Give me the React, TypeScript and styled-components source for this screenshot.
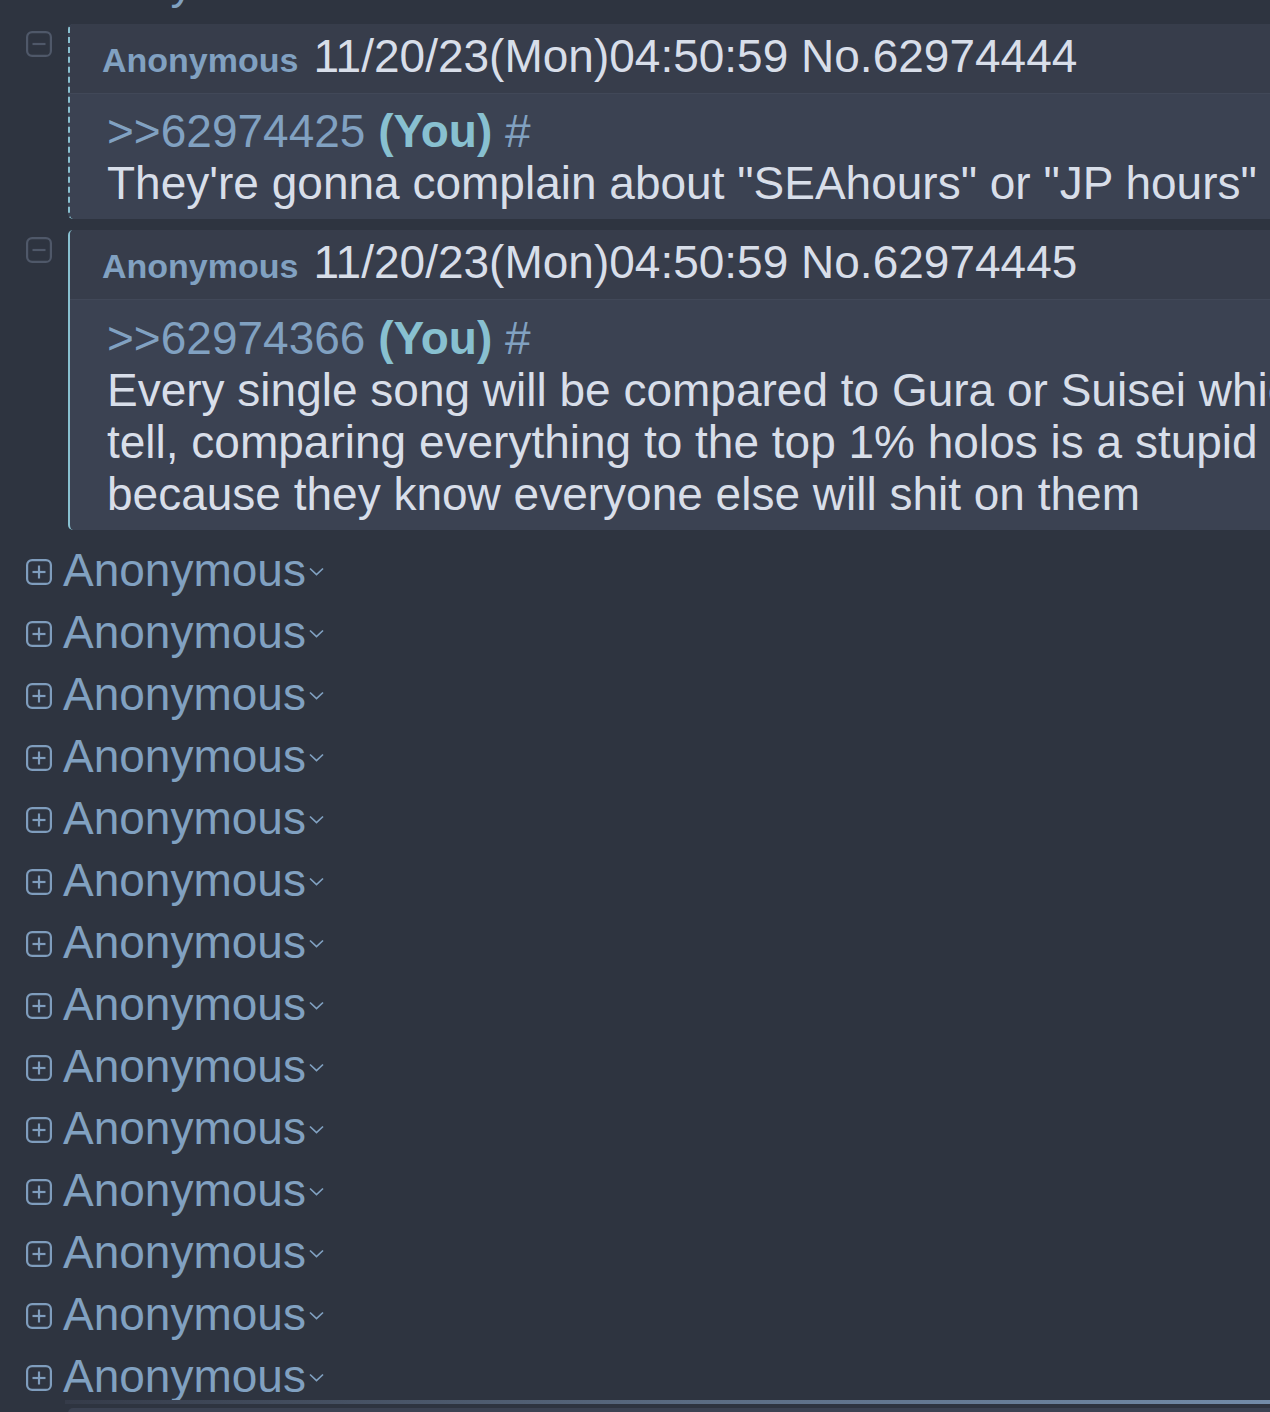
import React from "react";
import styled, { createGlobalStyle } from "styled-components";

const GlobalStyle = createGlobalStyle`
  html, body {
    margin: 0;
    padding: 0;
    background: #2e3440;
    overflow: hidden;
  }
  body {
    font-family: "Liberation Sans", Arial, Helvetica, sans-serif;
  }
`;

export const Thread = styled.div`
  display: flex;
  flex-direction: column;
  gap: 11px;
  margin-top: -49px;
  padding-left: 26px;
  width: 1600px;
`;

export const PostRow = styled.div`
  display: flex;
  align-items: flex-start;
  gap: 16px;
`;

export const ToggleIcon = styled.svg<{ $tone: "muted" | "link" }>`
  flex: none;
  width: 26px;
  height: 26px;
  margin-top: 7px;
  color: ${({ $tone }) => ($tone === "muted" ? "#4f5869" : "#7f9dbd")};
`;

export const Post = styled.div<{ $dashed?: boolean }>`
  width: 1420px;
  border-left: 2px ${({ $dashed }) => ($dashed ? "dashed" : "solid")} #88c0d0;
  border-radius: 5px 0 0 5px;
  background: #3b4252;
  overflow: hidden;
`;

export const PostHeader = styled.div`
  display: flex;
  align-items: baseline;
  gap: 15px;
  padding: 6px 0 7px 32px;
  background: #373d4b;
  border-bottom: 1px solid #414858;
  line-height: 52px;
  white-space: nowrap;
`;

export const Name = styled.span<{ $size?: number; $bold?: boolean }>`
  color: #81a1c1;
  font-size: ${({ $size }) => $size ?? 46}px;
  font-weight: ${({ $bold }) => ($bold ? 700 : 400)};
`;

export const DateLine = styled.span`
  color: #d8dee9;
  font-size: 46px;
`;

export const PostBody = styled.div<{ $top?: number }>`
  padding: ${({ $top }) => $top ?? 11}px 0 10px 37px;
  color: #d8dee9;
  font-size: 46px;
  line-height: 52px;
  white-space: nowrap;
`;

export const Quote = styled.span`
  color: #81a1c1;
`;

export const You = styled.span`
  color: #88c0d0;
  font-weight: 700;
`;

export const Rows = styled.div`
  display: flex;
  flex-direction: column;
  margin-top: -2px;
`;

export const CollapsedRow = styled.div`
  display: flex;
  align-items: flex-start;
  gap: 11px;
  padding: 9px 0;
  line-height: 44px;
  white-space: nowrap;
`;

export const RowIcon = styled(ToggleIcon)`
  margin-top: 11px;
`;

export const Chevron = styled.svg`
  width: 19px;
  height: 11px;
  margin: 18px 0 0 1px;
  color: #81a1c1;
`;

export const RowName = styled.span`
  display: flex;
  align-items: flex-start;
  color: #81a1c1;
  font-size: 46px;
`;

export const HighlightBar = styled.div`
  height: 4px;
  margin: -18px 0 0 39px;
  background: linear-gradient(90deg, #353b49 0%, #5a6b82 40%, #819fc0 100%);
`;

export const NextPost = styled.div`
  height: 40px;
  margin: -7px 0 0 42px;
  border-radius: 5px 0 0 0;
  background: #3b4252;
`;

const BoxIcon = ({ open, tone, row }: { open: boolean; tone: "muted" | "link"; row?: boolean }) => {
  const Icon = row ? RowIcon : ToggleIcon;
  return (
    <Icon $tone={tone} viewBox="0 0 26 26" fill="none">
      <rect x="1.1" y="1.1" width="23.8" height="23.8" rx="5" stroke="currentColor" strokeWidth="2.2" />
      <line x1="6.5" y1="13" x2="19.5" y2="13" stroke="currentColor" strokeWidth="2.2" />
      {!open && <line x1="13" y1="6.5" x2="13" y2="19.5" stroke="currentColor" strokeWidth="2.2" />}
    </Icon>
  );
};

const Collapsed = () => (
  <CollapsedRow>
    <BoxIcon open={false} tone="link" row />
    <RowName>
      Anonymous
      <Chevron viewBox="0 0 19 11" fill="none">
        <polyline points="3,2.5 9.5,8.5 16,2.5" stroke="currentColor" strokeWidth="1.7" />
      </Chevron>
    </RowName>
  </CollapsedRow>
);

const posts = [
  {
    no: "62974444",
    dashed: true,
    quote: "62974425",
    top: 11,
    lines: ['They\'re gonna complain about "SEAhours" or "JP hours" if they don\'t'],
  },
  {
    no: "62974445",
    dashed: false,
    quote: "62974366",
    top: 12,
    lines: [
      "Every single song will be compared to Gura or Suisei which is easy to",
      "tell, comparing everything to the top 1% holos is a stupid thing to do",
      "because they know everyone else will shit on them",
    ],
  },
];

const App = () => {
  return (
    <>
      <GlobalStyle />
      <Thread>
        <Collapsed />

        {posts.map((p) => (
          <PostRow key={p.no}>
            <BoxIcon open tone="muted" />
            <Post $dashed={p.dashed}>
              <PostHeader>
                <Name $size={34} $bold>
                  Anonymous
                </Name>
                <DateLine>11/20/23(Mon)04:50:59 No.{p.no}</DateLine>
              </PostHeader>
              <PostBody $top={p.top}>
                <Quote>&gt;&gt;{p.quote}</Quote> <You>(You)</You> <Quote>#</Quote>
                {p.lines.map((l) => (
                  <div key={l}>{l}</div>
                ))}
              </PostBody>
            </Post>
          </PostRow>
        ))}

        <Rows>
          {Array.from({ length: 14 }).map((_, i) => (
            <Collapsed key={i} />
          ))}
        </Rows>
        <HighlightBar />
        <NextPost />
      </Thread>
    </>
  );
};

export default App;
